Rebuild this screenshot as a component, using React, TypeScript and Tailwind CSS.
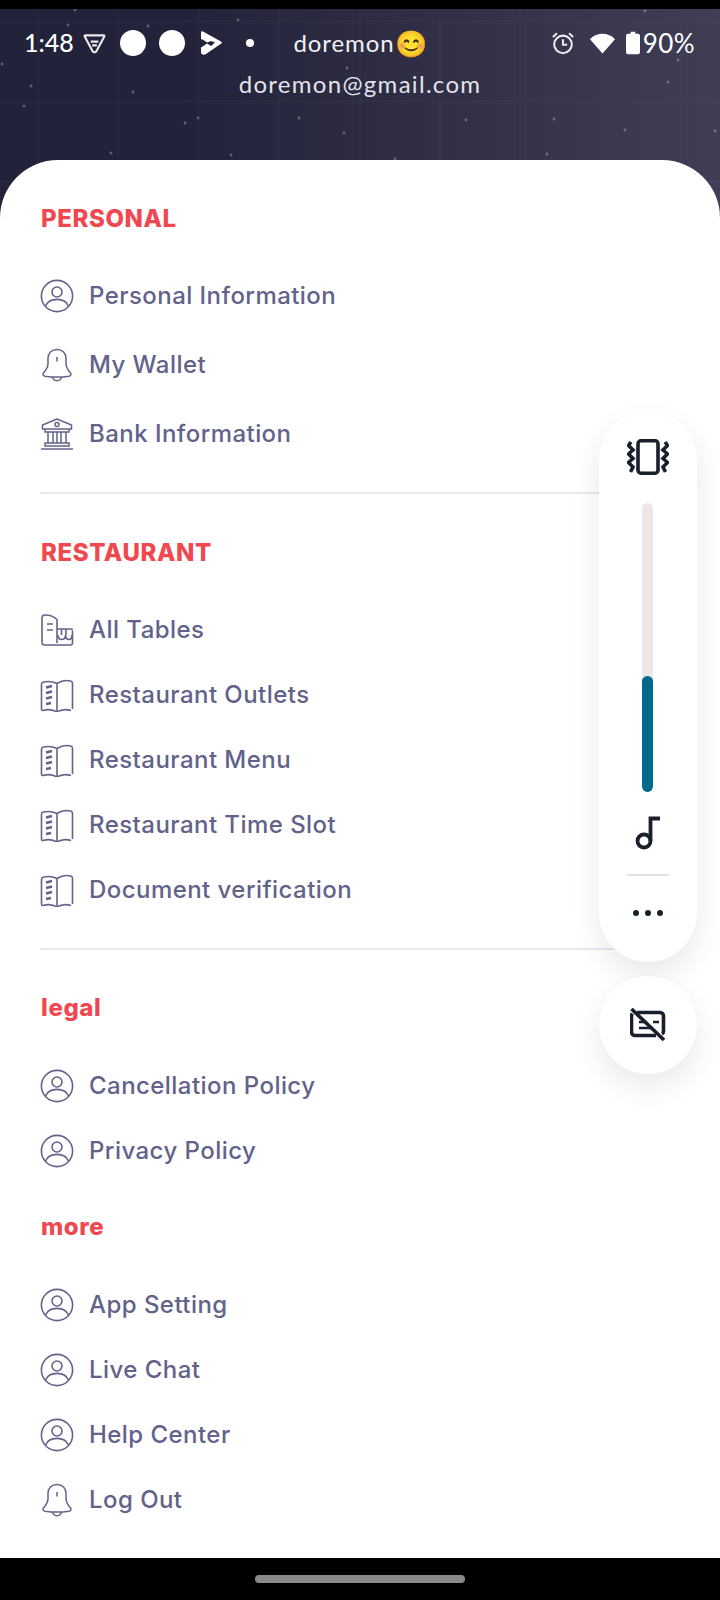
import React from 'react'

const stars = [
  [75, 10], [68, 25], [148, 26], [238, 20], [2, 64], [31, 86], [133, 92], [347, 68], [24, 106], [185, 123],
  [198, 118], [299, 118], [344, 133], [111, 153], [231, 155], [645, 11], [678, 60], [668, 82], [466, 120],
  [554, 119], [625, 130], [715, 131], [547, 154], [395, 159],
]

function HeaderBackdrop() {
  return (
    <svg className="absolute inset-0" width="720" height="211" viewBox="0 9 720 211">
      <defs>
        <linearGradient id="night" x1="0" y1="0" x2="1" y2="0">
          <stop offset="0.25" stopColor="#22223a" />
          <stop offset="1" stopColor="#403e54" />
        </linearGradient>
      </defs>
      <rect x="0" y="9" width="720" height="211" fill="url(#night)" />
      {[38, 118, 199, 279, 360, 440, 520, 601, 681].map((x) => (
        <line key={x} x1={x} y1="9" x2={x} y2="220" stroke="#ffffff" strokeOpacity="0.04" />
      ))}
      {[21, 101, 182].map((y) => (
        <line key={y} x1="0" y1={y} x2="720" y2={y} stroke="#ffffff" strokeOpacity="0.04" />
      ))}
      {stars.map(([x, y]) => (
        <circle key={`${x}-${y}`} cx={x} cy={y} r="1.4" fill="#ffffff" fillOpacity="0.28" />
      ))}
    </svg>
  )
}

function PersonIcon() {
  return (
    <svg width="34" height="34" viewBox="0 0 34 34" fill="none" stroke="#62628a" strokeWidth="1.600">
      <circle cx="17" cy="17" r="15.600" />
      <circle cx="17" cy="13" r="5" />
      <path d="M5.500 27c2-4.600 6-6.600 11.500-6.600S26.500 22.400 28.500 27" />
    </svg>
  )
}

function BellIcon() {
  return (
    <svg width="34" height="34" viewBox="0 0 34 34" fill="none" stroke="#62628a" strokeWidth="1.500">
      <path d="M17 1.500c-5.500 0-9 3.800-9 9v5c0 3.500-1.500 6-4.500 9.500-1 1.500-.5 2.800 1.500 3.200 8 1.200 16 1.200 24 0 2-.4 2.500-1.700 1.500-3.200-3-3.500-4.500-6-4.500-9.500v-5c0-5.200-3.500-9-9-9z" />
      <path d="M12.500 29.200c.5 2.200 2.300 3.500 4.500 3.500s4-1.300 4.500-3.500" />
      <path d="M17 9v4.500" />
    </svg>
  )
}

function BankIcon() {
  return (
    <svg width="34" height="34" viewBox="0 0 34 34" fill="none" stroke="#62628a" strokeWidth="1.500">
      <path d="M17 2 2.500 8v4h29V8z" />
      <circle cx="17" cy="7.500" r="2" />
      <path d="M5 12v3h24v-3M6 15h22M8 15v11M13 15v11M17 15v11M21 15v11M26 15v11M5 26h24v3H5zM1 32h32" />
    </svg>
  )
}

function TablesIcon() {
  return (
    <svg width="34" height="34" viewBox="0 0 34 34" fill="none" stroke="#62628a" strokeWidth="1.600">
      <path d="M2 29.500V5c0-2 1-3 3-3 4 0 9 1.500 12 4.500V30" />
      <path d="M2 29.500C2 31 3 32 4.500 32h26c1.200 0 2-.8 2-2V18M7 11h6M7 17h6" />
      <path d="M17 16h14c.8 0 1.500.7 1.500 1.500" />
      <path d="M18 22c0 3 1.800 4.500 3.800 4.500s3.700-1.500 3.700-4.500c0 3 1.800 4.500 3.500 4.500s3-1.500 3-4.500M21.500 16v6M26 16v6" />
    </svg>
  )
}

function MenuIcon() {
  return (
    <svg width="34" height="34" viewBox="0 0 34 34" fill="none" stroke="#62628a" strokeWidth="1.600">
      <path d="M17 5.500C13 3.500 8 3 3.500 4 2 4.300 1.500 5 1.500 6.500V31c0 1 .5 1.800 1.500 1.500 5-1.500 10-1 14 1.500 4-2.500 9-3 14-1.500M17 5.500c4-2.500 9-3.500 13.500-2.500 1.300.3 2 1 2 2.500V31M17 5.500V34" />
      <path d="M6 9.500l6-1.500M6 15l6-1.500M6 20.500l6-1.500M6 26l5-1" strokeWidth="2.600" />
    </svg>
  )
}

function Item({ icon, label, h }: { icon: React.ReactNode; label: string; h: string }) {
  return (
    <div className={`flex items-center gap-[15px] ${h}`}>
      <span className="flex h-[34px] w-[34px] flex-shrink-0 items-center justify-center">{icon}</span>
      <span className="font-['Inter',sans-serif] text-[24px] font-medium tracking-[0.45px] text-[#62628a]">{label}</span>
    </div>
  )
}

function Heading({ children, className }: { children: React.ReactNode; className: string }) {
  return (
    <h2 className={`flex h-[30px] items-center pl-[1px] font-['Inter',sans-serif] text-[24px] font-extrabold tracking-[0.6px] text-[#ef4850] ${className}`}>
      {children}
    </h2>
  )
}

function StatusBar() {
  return (
    <div className="absolute inset-x-0 top-[10px] flex h-[48px] items-center justify-between px-[25px] font-['Lato',sans-serif] text-[26px] tracking-[0.4px] text-white">
      <div className="flex items-center">
        <span className="-ml-[1px] w-[47px] text-[25px] font-medium tracking-normal">1:48</span>
        <svg className="ml-[12px]" width="23" height="23" viewBox="0 0 24 24" fill="none" stroke="#ffffff" strokeWidth="2.200" opacity="0.9">
          <path d="M2.500 3.500h19c.8 0 1 .6.700 1.300L14 20c-1 1.500-3 1.500-4 0L1.800 4.800c-.3-.7-.1-1.300.7-1.300z" />
          <path d="M8 10h8M9.500 14h5" strokeWidth="2.500" />
        </svg>
        <span className="ml-[14px] h-[26px] w-[26px] rounded-full bg-white" />
        <span className="ml-[13px] h-[26px] w-[26px] rounded-full bg-white" />
        <svg className="ml-[14px]" width="24" height="24" viewBox="0 0 24 24" fill="#ffffff">
          <path d="M2 1.500c0-1 1-1.500 2-1l18 10c1 .6 1 1.500.3 2L7 23c-1 .7-3 1-4.200 0-.8-.6-.8-1.600-.8-2.500v-4l6-4 4 2.500 4-3.500-4-1.500-4 1.500L4.500 9 2 8z" />
        </svg>
        <span className="ml-[23px] h-[8px] w-[8px] rounded-full bg-white" />
      </div>
      <div className="flex items-center">
        <svg width="24" height="24" viewBox="0 0 26 26" fill="none" stroke="#ffffff" strokeWidth="2.200" opacity="0.9">
          <circle cx="13" cy="14.500" r="9.500" />
          <path d="M13 9v6h4.500M2 6.500 6.500 2.500M24 6.500l-4.500-4" />
        </svg>
        <svg className="ml-[14px]" width="27" height="24" viewBox="0 0 28 24" fill="#ffffff">
          <path d="M14 23 1 8c3.500-3.500 8-5.500 13-5.500S23.500 4.500 27 8z" />
        </svg>
        <svg className="ml-[10px]" width="14" height="24" viewBox="0 0 15 24" fill="#ffffff">
          <path d="M5 0h5v2h3c1 0 2 1 2 2v18c0 1-1 2-2 2H2c-1 0-2-1-2-2V4c0-1 1-2 2-2h3z" />
        </svg>
        <span className="ml-[3px]">90%</span>
      </div>
    </div>
  )
}

function VolumePanel() {
  return (
    <div className="absolute left-[599px] top-[412px] flex flex-col items-center gap-[14px]">
      <div className="flex h-[550px] w-[98px] flex-col items-center rounded-full bg-white pt-[27px] shadow-[0_12px_30px_rgba(0,0,0,0.09)]">
        <svg width="42" height="36" viewBox="0 0 42 36" fill="none" stroke="#1a1f2e" strokeWidth="3.600">
          <rect x="11" y="1.800" width="20" height="32.400" rx="3" />
          <path d="M4 3 1.500 6.500 6 11l-4.500 4 4.500 4.500-4.500 4 4.500 4.500L3.500 33M38 3l2.500 3.500L36 11l4.500 4-4.500 4.500 4.500 4L36 28l2.500 5" />
        </svg>
        <div className="mr-[1px] mt-[28px] flex h-[289px] w-[11px] flex-col justify-end overflow-hidden rounded-full bg-[#ece8e5]">
          <div className="h-[116px] rounded-full bg-[#006a8e]" />
        </div>
        <svg className="mt-[24px]" width="28" height="34" viewBox="0 0 28 34" fill="none" stroke="#1a1f2e" strokeWidth="3.800">
          <circle cx="10" cy="25" r="6.500" />
          <path d="M16.500 25V2.500h9.500" />
        </svg>
        <div className="mt-[24px] h-[2px] w-[42px] bg-[#e2e2e2]" />
        <div className="mt-[34px] flex gap-[6px]">
          <span className="h-[6px] w-[6px] rounded-full bg-[#1a1f2e]" />
          <span className="h-[6px] w-[6px] rounded-full bg-[#1a1f2e]" />
          <span className="h-[6px] w-[6px] rounded-full bg-[#1a1f2e]" />
        </div>
      </div>
      <div className="flex h-[98px] w-[98px] items-center justify-center rounded-full bg-white shadow-[0_12px_30px_rgba(0,0,0,0.09)]">
        <svg width="36" height="34" viewBox="0 0 36 34" fill="none" stroke="#1a1f2e" strokeWidth="3.600">
          <path d="M7 4.500H30c2 0 3.500 1.500 3.500 3.500v15c0 1.500-.5 2.500-1.500 3M26 27.500H5c-2 0-3.500-1.500-3.500-3.500V8c0-1 .3-1.800.8-2.500" />
          <path d="M1.500 1 34 32" />
          <path d="M9 14h8M23 14h6M9 20h14" strokeWidth="2.400" />
        </svg>
      </div>
    </div>
  )
}

export default function App() {
  return (
    <div className="relative flex h-[1600px] w-[720px] flex-col overflow-hidden bg-black">
      <div className="h-[9px] flex-shrink-0" />

      {/* Header */}
      <div className="relative h-[211px] flex-shrink-0">
        <HeaderBackdrop />
        <StatusBar />
        <div className="relative flex flex-col items-center pt-[19px] font-['Lato',sans-serif] text-[24px] text-[#f0f0f4]">
          <div className="flex h-[30px] items-center tracking-[0.9px]">
            doremon<span className="text-[26px] tracking-normal">😊</span>
          </div>
          <div className="mt-[11px] h-[30px] leading-[30px] tracking-[1.300px] text-[#e2e2e8]">doremon@gmail.com</div>
        </div>
      </div>

      {/* Menu */}
      <div className="relative -mt-[60px] h-[1398px] flex-shrink-0 rounded-t-[58px] bg-white px-10 pt-[44px]">
        <Heading className="uppercase">Personal</Heading>
        <div className="mt-[27px]">
          <Item h="h-[69px]" icon={<PersonIcon />} label="Personal Information" />
          <Item h="h-[69px]" icon={<BellIcon />} label="My Wallet" />
          <Item h="h-[69px]" icon={<BankIcon />} label="Bank Information" />
        </div>
        <div className="mt-[24px] h-[2px] bg-[#e9e8ef]" />

        <Heading className="mt-[44px] uppercase">Restaurant</Heading>
        <div className="mt-[29px]">
          <Item h="h-[65px]" icon={<TablesIcon />} label="All Tables" />
          <Item h="h-[65px]" icon={<MenuIcon />} label="Restaurant Outlets" />
          <Item h="h-[65px]" icon={<MenuIcon />} label="Restaurant Menu" />
          <Item h="h-[65px]" icon={<MenuIcon />} label="Restaurant Time Slot" />
          <Item h="h-[65px]" icon={<MenuIcon />} label="Document verification" />
        </div>
        <div className="mt-[26px] h-[2px] bg-[#e9e8ef]" />

        <Heading className="mt-[43px]">legal</Heading>
        <div className="mt-[30px]">
          <Item h="h-[65px]" icon={<PersonIcon />} label="Cancellation Policy" />
          <Item h="h-[65px]" icon={<PersonIcon />} label="Privacy Policy" />
        </div>

        <Heading className="mt-[29px]">more</Heading>
        <div className="mt-[30px]">
          <Item h="h-[65px]" icon={<PersonIcon />} label="App Setting" />
          <Item h="h-[65px]" icon={<PersonIcon />} label="Live Chat" />
          <Item h="h-[65px]" icon={<PersonIcon />} label="Help Center" />
          <Item h="h-[65px]" icon={<BellIcon />} label="Log Out" />
        </div>
      </div>

      {/* Nav bar */}
      <div className="flex flex-1 items-center justify-center">
        <div className="h-[8px] w-[210px] rounded-full bg-[#8a8a8a]" />
      </div>

      <VolumePanel />
    </div>
  )
}
